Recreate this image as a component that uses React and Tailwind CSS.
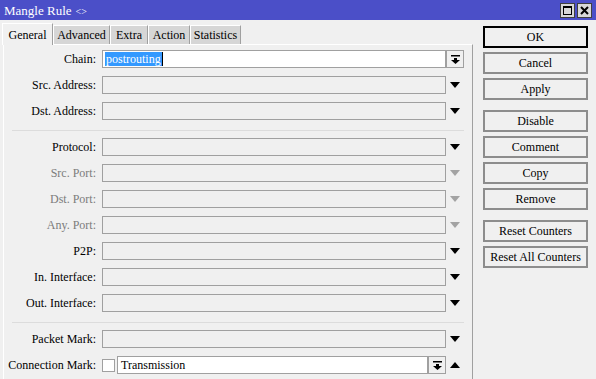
import React from "react";

function DownTri({ grey }) {
  return (
    <svg width="10" height="6" viewBox="0 0 10 6">
      <polygon points="0,0 10,0 5,6" fill={grey ? "#a3a3a3" : "#000"} />
    </svg>
  );
}
function UpTri() {
  return (
    <svg width="10" height="6" viewBox="0 0 10 6">
      <polygon points="0,6 10,6 5,0" fill="#000" />
    </svg>
  );
}
function BoxBtn() {
  return (
    <div className="w-[18px] h-[18px] border border-[#a0a0a0] bg-[#f0f0f0] flex items-center justify-center">
      <svg width="9" height="9" viewBox="0 0 9 9">
        <rect x="0" y="0" width="9" height="1.5" fill="#000" />
        <rect x="3" y="3" width="3" height="2" fill="#000" />
        <polygon points="0,5 9,5 4.5,9" fill="#000" />
      </svg>
    </div>
  );
}

function Row({ label, grey, children }) {
  return (
    <div className="flex items-center h-[18px] mb-[8px] shrink-0">
      <div
        className={`w-[92px] text-right text-[12px] leading-none ${grey ? "text-[#7c7c7c]" : "text-black"}`}
      >
        {label}
      </div>
      <div className="ml-[6px] flex items-center">{children}</div>
    </div>
  );
}

function Field({ label, grey }) {
  return (
    <Row label={label} grey={grey}>
      <div className="w-[344px] h-[18px] border border-[#a0a0a0] bg-[#f0f0f0]" />
      <div className="w-[18px] flex justify-center">
        <DownTri grey={grey} />
      </div>
    </Row>
  );
}

function Sep() {
  return <div className="ml-[8px] mt-[2px] mb-[7px] w-[452px] h-px bg-[#dcdcdc] shrink-0" />;
}

function Btn({ children, def, className = "" }) {
  return (
    <div
      className={`w-[105px] h-[22px] border-2 ${def ? "border-black" : "border-[#8d8d8d]"} bg-[#f0f0f0] flex items-center justify-center text-[12px] text-black shrink-0 ${className}`}
    >
      {children}
    </div>
  );
}

function Tab({ children, w }) {
  return (
    <div
      className={`h-[19px] ${w} bg-[#d6d6d6] border-l border-t border-white border-r border-r-[#a0a0a0] flex items-center justify-center text-[12px]`}
    >
      {children}
    </div>
  );
}

export default function App() {
  return (
    <div className="w-[596px] h-[379px] bg-[#f0f0f0] overflow-hidden flex flex-col font-['Liberation_Serif','Times_New_Roman',serif]">
      <div className="h-[20px] bg-[#4b4fc8] flex items-center justify-between pl-[4px] pr-[4px] shrink-0">
        <div className="text-white text-[13px] leading-none flex items-baseline">
          Mangle Rule <span className="text-[10px] ml-[4px]">&lt;&gt;</span>
        </div>
        <div className="flex gap-[2px]">
          <div className="w-[15px] h-[15px] bg-[#d8d8d8] border border-[#404040] flex items-center justify-center">
            <div className="w-[9px] h-[9px] border border-black border-t-2" />
          </div>
          <div className="w-[15px] h-[15px] bg-[#d8d8d8] border border-[#404040] flex items-center justify-center">
            <svg width="9" height="9" viewBox="0 0 9 9">
              <path d="M1 1 L8 8 M8 1 L1 8" stroke="#000" strokeWidth="2" />
            </svg>
          </div>
        </div>
      </div>
      <div className="flex flex-1">
        <div className="w-[473px] flex flex-col">
          <div className="h-[24px] flex items-end pl-[2px]">
            <div className="h-[22px] w-[51px] bg-[#f0f0f0] border-l border-t border-white border-r border-r-[#a0a0a0] flex items-center justify-center text-[12px] relative top-px">
              General
            </div>
            <Tab w="w-[57px]">Advanced</Tab>
            <Tab w="w-[38px]">Extra</Tab>
            <Tab w="w-[42px]">Action</Tab>
            <Tab w="w-[51px]">Statistics</Tab>
          </div>
          <div className="flex-1 ml-[3px] border-l border-t border-white border-r border-r-[#a0a0a0] pt-[5px] flex flex-col">
            <Row label="Chain:">
              <div className="w-[344px] h-[18px] border border-[#a0a0a0] bg-white flex items-center pl-[2px]">
                <span className="bg-[#3399ff] text-white text-[12px] leading-[14px] px-px">postrouting</span>
                <span className="w-px h-[14px] bg-black" />
              </div>
              <BoxBtn />
            </Row>
            <Field label="Src. Address:" />
            <Field label="Dst. Address:" />
            <Sep />
            <Field label="Protocol:" />
            <Field label="Src. Port:" grey />
            <Field label="Dst. Port:" grey />
            <Field label="Any. Port:" grey />
            <Field label="P2P:" />
            <Field label="In. Interface:" />
            <Field label="Out. Interface:" />
            <Sep />
            <Field label="Packet Mark:" />
            <Row label="Connection Mark:">
              <div className="w-[13px] h-[13px] border border-[#a0a0a0] bg-white mr-[2px]" />
              <div className="w-[311px] h-[18px] border border-[#a0a0a0] bg-white flex items-center pl-[3px] text-[12px]">
                Transmission
              </div>
              <BoxBtn />
              <div className="w-[18px] flex justify-center">
                <UpTri />
              </div>
            </Row>
          </div>
        </div>
        <div className="flex-1 pl-[10px] pt-[6px] flex flex-col gap-[4px]">
          <Btn def>OK</Btn>
          <Btn>Cancel</Btn>
          <Btn>Apply</Btn>
          <Btn className="mt-[6px]">Disable</Btn>
          <Btn>Comment</Btn>
          <Btn>Copy</Btn>
          <Btn>Remove</Btn>
          <Btn className="mt-[6px]">Reset Counters</Btn>
          <Btn>Reset All Counters</Btn>
        </div>
      </div>
    </div>
  );
}
